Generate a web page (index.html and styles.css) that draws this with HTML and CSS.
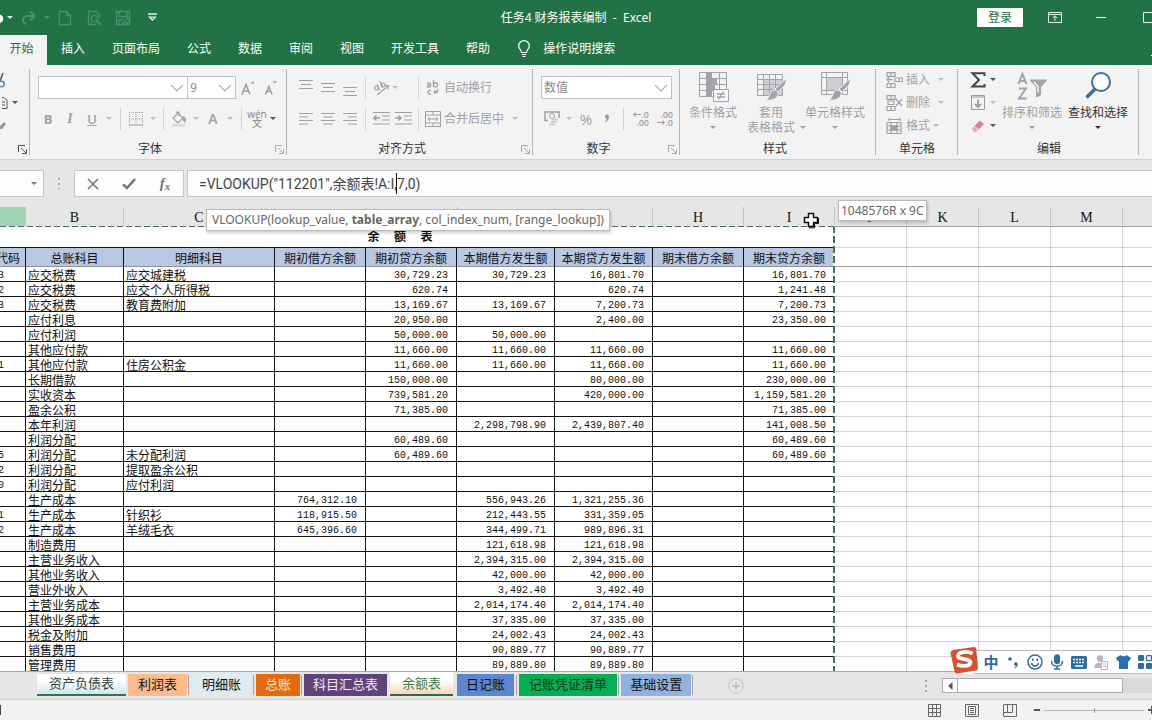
FILE: index.html
```html
<!DOCTYPE html>
<html lang="zh-CN">
<head>
<meta charset="utf-8">
<title>任务4 财务报表编制 - Excel</title>
<link rel="stylesheet" href="styles.css">
</head>
<body>
<header class="titlebar">
  <div class="qat">
    <button class="qb w4" aria-label="撤消"><svg width="4" height="16" viewBox="0 0 4 16"><path d="M-1 4.500A4 4 0 0 1-1 13z" fill="#fff"/></svg></button>
    <button class="dd w12 lit" aria-label="撤消列表"></button>
    <button class="qb w26 faint" aria-label="恢复"><svg width="16" height="16" viewBox="0 0 16 16" fill="none" stroke="currentColor" stroke-width="2"><path d="M12 6H6.500a4 4 0 0 0-1 8M9 1.500 13.500 6 9 10.500"/></svg></button>
    <button class="dd w10 faint" aria-label="恢复列表"></button>
    <button class="qb w26 faint" aria-label="新建"><svg width="16" height="16" viewBox="0 0 16 16" fill="none" stroke="currentColor" stroke-width="1.300"><path d="M2.500 1.500h7l4 4v9h-11zM9.500 1.500v4h4"/></svg></button>
    <button class="qb w32 faint" aria-label="打印预览"><svg width="16" height="16" viewBox="0 0 16 16" fill="none" stroke="currentColor" stroke-width="1.300"><path d="M13.500 8V5l-3-3.500h-8v13h8"/><circle cx="8.500" cy="8.500" r="3.200"/><path d="m11 11 4 4" stroke-width="2"/></svg></button>
    <button class="qb w26 faint" aria-label="保存"><svg width="16" height="16" viewBox="0 0 16 16" fill="none" stroke="currentColor" stroke-width="1.400"><path d="M1.500 1.500h13v13h-13zM4 2v4.500h8V2M4 14v-4h4M8 13l5-5 2 2-5 5z"/></svg></button>
    <button class="qb w32" aria-label="自定义快速访问工具栏"><svg width="9" height="9" viewBox="0 0 9 9" fill="none" stroke="#e2f0e8" stroke-width="1.300"><path d="M0 1h9M1.500 4.200 4.500 7.200l3-3z"/></svg></button>
  </div>
  <div class="doc-title">任务4 财务报表编制&nbsp; -&nbsp; Excel</div>
  <div class="win">
    <button class="login">登录</button>
    <button class="qb w64" aria-label="功能区显示选项"><svg width="14" height="11" viewBox="0 0 14 11" fill="none" stroke="#e2f0e8"><path d="M.500.500h13v10H.500zM.500 2.500h13M7 9V4M4.800 6 7 3.800 9.200 6"/></svg></button>
    <button class="qb w28" aria-label="最小化"><svg width="10" height="3" viewBox="0 0 10 3"><path d="M0 1.500h10" stroke="#e2f0e8"/></svg></button>
    <button class="qb shift" aria-label="最大化"><svg width="12" height="11" viewBox="0 0 12 11"><path d="M.500.500h11v10H.500z" fill="none" stroke="#e2f0e8"/></svg></button>
  </div>
</header>
<nav class="tabs">
  <button class="tab on">开始</button>
  <div class="tab-list">
    <button class="tab">插入</button><button class="tab">页面布局</button><button class="tab">公式</button><button class="tab">数据</button><button class="tab">审阅</button><button class="tab">视图</button><button class="tab">开发工具</button><button class="tab">帮助</button>
    <button class="tab tell"><svg width="14" height="18" viewBox="0 0 14 18" fill="none" stroke="#fff" stroke-width="1.200"><path d="M4.500 12.500c0-2.500-2.800-3.200-2.800-6.500a5.300 5.300 0 0 1 10.600 0c0 3.300-2.800 4-2.800 6.500zM4.800 14.500h4.400M5.500 16.500h3"/></svg>操作说明搜索</button>
  </div>
  <button class="collapse" aria-label="折叠功能区"><svg width="10" height="8" viewBox="0 0 10 8"><path d="m1 6 4-4 4 4" fill="none" stroke="#fff"/></svg></button>
</nav>

<section class="ribbon" aria-label="功能区">
  <div class="group g-clip">
    <div class="stack">
      <button class="ib" aria-label="剪切"><svg width="6" height="16" viewBox="0 0 6 16" fill="none"><path d="M0 9 3 1" stroke="#555" stroke-width="1.500"/><circle cx="1.500" cy="12" r="2.800" stroke="#4f81a8" stroke-width="1.300"/></svg></button>
      <div class="row"><button class="ib w9" aria-label="复制"><svg width="6" height="14" viewBox="0 0 6 14" fill="none" stroke="#555"><path d="M0 1.500h2l3 3v8H0M0 6h3M0 9h3"/></svg></button><button class="dd w12 dark" aria-label="复制选项"></button></div>
      <button class="ib" aria-label="格式刷"><svg width="7" height="14" viewBox="0 0 7 14"><path d="M0 7 4 3l2 2-4 5H0z" fill="#999"/></svg></button>
    </div>
    <div class="foot"><button class="launch dark" aria-label="剪贴板设置"><svg width="9" height="9" viewBox="0 0 9 9" fill="none" stroke="currentColor"><path d="M.500 7V.500H7M3 3l5 5M8.500 4v4.500H4"/></svg></button></div>
  </div>

  <div class="group g-font">
    <div class="row r1">
      <select class="combo w150" aria-label="字体"><option></option></select><select class="combo w49" aria-label="字号"><option>9</option></select>
      <button class="ib w24" aria-label="增大字号"><svg width="16" height="16" viewBox="0 0 16 16" fill="none" stroke="currentColor" stroke-width="1.600"><path d="M2 14.500 6 4.500l4 10M3.500 11h5"/><path d="m10.500 3.500 2.200-2.300L15 3.500z" fill="currentColor" stroke="none"/></svg></button>
      <button class="ib w24" aria-label="减小字号"><svg width="16" height="16" viewBox="0 0 16 16" fill="none" stroke="currentColor" stroke-width="1.600"><path d="m1.500 14.500 3.300-8 3.300 8M2.500 11.500h4.600"/><path d="m8.500 1.200 2.200 2.300L13 1.200z" fill="currentColor" stroke="none"/></svg></button>
    </div>
    <div class="row r2">
      <button class="ib w22 letter bold">B</button><button class="ib w22 letter ital">I</button><button class="ib w22 letter under">U</button><button class="dd w12" aria-label="下划线选项"></button><i class="sep w10"></i>
      <button class="ib w22" aria-label="边框"><svg width="14" height="14" viewBox="0 0 14 14" fill="none" stroke="#a99aaa"><path d="M.500 0v13M7 0v13M13.500 0v13M0 .500h14M0 7h14" stroke-dasharray="1 1"/><path d="M0 13h14" stroke="#999"/></svg></button><button class="dd w12" aria-label="边框选项"></button><i class="sep w8"></i>
      <button class="ib w24" aria-label="填充颜色"><svg width="16" height="16" viewBox="0 0 16 16" fill="none" stroke="currentColor" stroke-width="1.200"><path d="m2 7 5-5 5 5-5 5zM6 4.500V1h2v4"/><path d="M12 6c2.500.500 2.500 2.500 2 5-1-.500-2-2-2-5z" fill="currentColor"/><path d="M1 14.200h13" stroke="#dcdcdf" stroke-width="3"/></svg></button><button class="dd w10" aria-label="填充选项"></button>
      <button class="ib w24 letter semi">A</button><button class="dd w10" aria-label="字体颜色选项"></button><i class="sep w12"></i>
      <button class="ib w20 wen" aria-label="拼音指南"><span>wén</span><span>文</span></button><button class="dd w12 dark" aria-label="拼音选项"></button>
    </div>
    <div class="foot">字体<button class="launch" aria-label="字体设置"><svg width="9" height="9" viewBox="0 0 9 9" fill="none" stroke="currentColor"><path d="M.500 7V.500H7M3 3l5 5M8.500 4v4.500H4"/></svg></button></div>
  </div>

  <div class="group g-align">
    <div class="row r1">
      <button class="ib w22" aria-label="顶端对齐"><svg width="14" height="16" viewBox="0 0 14 16" stroke="currentColor"><path d="M0 .500h14M2 4.500h10M0 8.500h14"/></svg></button><button class="ib w22" aria-label="垂直居中"><svg width="14" height="16" viewBox="0 0 14 16" stroke="currentColor"><path d="M0 3.500h14M2 7.500h10M0 11.500h14"/></svg></button><button class="ib w22" aria-label="底端对齐"><svg width="14" height="16" viewBox="0 0 14 16" stroke="currentColor"><path d="M0 7.500h14M2 11.500h10M0 15.500h14"/></svg></button><i class="sep w9"></i>
      <button class="ib w22" aria-label="方向"><svg width="18" height="16" viewBox="0 0 18 16" fill="none" stroke="currentColor" stroke-width="1.200"><circle cx="4.500" cy="8" r="2"/><path d="M5 4.500 7.500 10M7.500 1l3.500 6"/><circle cx="11" cy="5" r="2"/><path d="M5 15 16 6M12.500 5.500 16.500 5.500 15.800 9.500"/></svg></button><button class="dd w22 lead" aria-label="方向选项"></button><i class="sep w8"></i>
      <button class="ib txt"><svg width="16" height="16" viewBox="0 0 16 16" fill="none" stroke="currentColor" stroke-width="1.300"><path d="M2 3.300c3-1 3.500 0 3.500 1.200V7M5.500 5c-4-.300-4 2.300-2 2.300 1 0 2-.800 2-1.500M8.500 0v7M8.500 4c1-2 4-1.500 4 .800S9.500 7.500 8.500 5.800M6 10.500c-4-1-4 4.500 0 3.500M12.500 9v3H9M10.500 10.500 9 12l1.500 1.500"/></svg>自动换行</button>
    </div>
    <div class="row r2">
      <button class="ib w22" aria-label="左对齐"><svg width="14" height="12" viewBox="0 0 14 12" stroke="currentColor"><path d="M0 .500h14M0 4h9M0 7.500h14M0 11h9"/></svg></button><button class="ib w22" aria-label="居中"><svg width="14" height="12" viewBox="0 0 14 12" stroke="currentColor"><path d="M0 .500h14M2.500 4h9M0 7.500h14M2.500 11h9"/></svg></button><button class="ib w22" aria-label="右对齐"><svg width="14" height="12" viewBox="0 0 14 12" stroke="currentColor"><path d="M0 .500h14M5 4h9M0 7.500h14M5 11h9"/></svg></button><i class="sep w9"></i>
      <button class="ib w22" aria-label="减少缩进"><svg width="17" height="13" viewBox="0 0 17 13" stroke="currentColor" fill="none"><path d="M0 .500h17M9 4h8M9 8h8M0 12h17"/><path d="M1 6h6M3.500 3.500 1 6l2.500 2.500" stroke-width="1.600"/></svg></button><button class="ib w22" aria-label="增加缩进"><svg width="17" height="13" viewBox="0 0 17 13" stroke="currentColor" fill="none"><path d="M0 .500h17M9 4h8M9 8h8M0 12h17"/><path d="M0 6h6M3.500 3.500 6 6 3.500 8.500" stroke-width="1.600"/></svg></button><i class="sep w8"></i>
      <button class="ib txt"><svg width="16" height="16" viewBox="0 0 16 16" fill="none" stroke="currentColor"><path d="M.500.500h15v15H.500zM.500 4h15M.500 12h15M8 .500V4M8 12v3.500M3 8h10M5 6 3 8l2 2M11 6l2 2-2 2"/></svg>合并后居中</button><button class="dd w22" aria-label="合并选项"></button>
    </div>
    <div class="foot">对齐方式<button class="launch" aria-label="对齐设置"><svg width="9" height="9" viewBox="0 0 9 9" fill="none" stroke="currentColor"><path d="M.500 7V.500H7M3 3l5 5M8.500 4v4.500H4"/></svg></button></div>
  </div>

  <div class="group g-num">
    <div class="row r1"><select class="combo w131 fmt" aria-label="数字格式"><option>数值</option></select></div>
    <div class="row r2">
      <button class="ib w22" aria-label="会计格式"><svg width="16" height="15" viewBox="0 0 16 15" fill="none" stroke="currentColor"><path d="M4 9.500H1V1h14v6" stroke-width="1.500"/><circle cx="8" cy="5" r="2.500"/><path d="M8 8.500h6M7 11h6M5 13.500h6" stroke="#d3cdd5" stroke-width="2"/></svg></button><button class="dd w12" aria-label="会计选项"></button>
      <button class="ib w22 pct">%</button><button class="ib w20" aria-label="千位分隔"><svg width="6" height="9" viewBox="0 0 6 9"><path d="M1 2.500a2 2 0 1 1 4 0c0 3-1.500 4.500-3.500 6l-.500-.500C2.200 7 2.500 6 2.500 4.600 1.500 4.500 1 3.500 1 2.500z" fill="#999"/></svg></button><i class="sep w12"></i>
      <button class="ib w20 dec"><span>←.0</span><span>.00</span></button><button class="ib w24 dec"><span>.00</span><span>→.0</span></button>
    </div>
    <div class="foot">数字<button class="launch" aria-label="数字设置"><svg width="9" height="9" viewBox="0 0 9 9" fill="none" stroke="currentColor"><path d="M.500 7V.500H7M3 3l5 5M8.500 4v4.500H4"/></svg></button></div>
  </div>

  <div class="group g-style">
    <div class="bigs">
      <button class="big w58"><svg width="32" height="32" viewBox="0 0 32 32" fill="none" stroke="#a5a2a8"><path d="M2.500 1.500h27v24h-27zM2.500 7.500h27M2.500 13.500h27M2.500 19.500h27M9.500 1.500v24M22.500 1.500v24"/><path d="M10 2h5v5h-5zM10 8h10v5H10zM10 14h8v5h-8zM10 20h5v5h-5z" fill="#a5a2a8" stroke="none"/><path d="M16.500 18.500h15v12h-15z" fill="#f8f7f9"/><path d="M20 23h8M20 26h8M26.500 20.500l-5 8" stroke-width="1.300"/></svg><span>条件格式</span><i class="tri"></i></button>
      <button class="big w58"><svg width="32" height="32" viewBox="0 0 32 32" fill="none" stroke="#a5a2a8"><path d="M8.500 8.500h19v16h-19z" fill="#cfccd2" stroke="none"/><path d="M2.500 3.500h25v21h-25zM2.500 8.500h25M2.500 13.500h25M2.500 18.500h25M8.500 3.500v21M14.500 3.500v21M20.500 3.500v21"/><path d="m32 7-2 7-7 7-3-3z" fill="#a5a2a8" stroke="#f3f3f3"/><path d="M19 19c3 0 5 2 4 5s-5 6-12 5c4-2 3-9 8-10z" fill="#a5a2a8" stroke="#f3f3f3"/></svg><span>套用</span><span class="with">表格格式<i class="tri"></i></span></button>
      <button class="big w70"><svg width="32" height="32" viewBox="0 0 32 32" fill="none" stroke="#a5a2a8"><path d="M8 7h15v12H8z" fill="#cfccd2" stroke="none"/><path d="M2.500 1.500h26v22h-26zM2.500 6.500h26M2.500 19.500h26M7.500 1.500v22M23.500 1.500v22"/><path d="m32 7-2 7-7 7-3-3z" fill="#a5a2a8" stroke="#f3f3f3"/><path d="M18 19c3 0 5 2 4 5s-5 6-12 5c4-2 3-9 8-10z" fill="#a5a2a8" stroke="#f3f3f3"/></svg><span>单元格样式</span><i class="tri"></i></button>
    </div>
    <div class="foot">样式</div>
  </div>

  <div class="group g-cells">
    <div class="stack">
      <div class="row"><button class="ib txt"><svg width="17" height="16" viewBox="0 0 17 16" fill="none" stroke="currentColor" stroke-width="1.200"><path d="M1 .600h8v3.800H1zM5 .600v3.800M1 11.500h8v4H1zM5 11.500v4M9 6h7.500v3.500H9zM13 6v3.500M7 7.700H1M3.500 5 1 7.700l2.500 2.700"/></svg>插入</button><button class="dd w22" aria-label="插入选项"></button></div>
      <div class="row"><button class="ib txt"><svg width="17" height="16" viewBox="0 0 17 16" fill="none" stroke="currentColor" stroke-width="1.200"><path d="M1 .600h8v3.800H1zM5 .600v3.800M1 11.500h8v4H1zM5 11.500v4M2 6h6v3.500H2zM10 4l6 7M16 4l-6 7"/></svg>删除</button><button class="dd w22" aria-label="删除选项"></button></div>
      <div class="row"><button class="ib txt"><svg width="17" height="16" viewBox="0 0 17 16" fill="none" stroke="currentColor" stroke-width="1.200"><path d="M3 0v3M14 0v3M3 1.500h11M1 4.500h14v11H1zM5 4.500v11M11 4.500v11M1 8h14M1 12h14"/><path d="M5 8h6v4H5z" fill="currentColor"/></svg>格式</button><button class="dd w12" aria-label="格式选项"></button></div>
    </div>
    <div class="foot">单元格</div>
  </div>

  <div class="group g-edit">
    <div class="side">
      <div class="stack">
        <div class="row"><button class="ib w18" aria-label="求和"><svg width="16" height="16" viewBox="0 0 16 16" fill="none" stroke="#444" stroke-width="2"><path d="M14.500 4V1.300H2.500L9 8l-6.500 6.500h12V12"/></svg></button><button class="dd w12 dark" aria-label="求和选项"></button></div>
        <div class="row"><button class="ib w18" aria-label="填充"><svg width="14" height="15" viewBox="0 0 14 15" fill="none" stroke="#999"><path d="M.500.500h13v14H.500zM.500 2h13"/><path d="M7 4.500V12M4 9l3 3 3-3" stroke-width="1.800"/></svg></button><button class="dd w12" aria-label="填充选项"></button></div>
        <div class="row"><button class="ib w18" aria-label="清除"><svg width="14" height="14" viewBox="0 0 14 14"><path d="M9 1.500 13 5 7.500 10.500 3.500 7z" fill="#dd7d99"/><path d="m3 7.500 4 3.500-2 2H3L1 10.500V9.500z" fill="#ecaabb"/></svg></button><button class="dd w12 dark" aria-label="清除选项"></button></div>
      </div>
      <button class="big w66"><svg width="32" height="32" viewBox="0 0 32 32" fill="none" stroke="#a5a2a8"><path d="M2.500 13 6.500 3l4 10M4 10h5M3 17.500h7L3 27.500h7.500" stroke-width="2"/><path d="M14 9h17l-6.500 7v8l-4 2V16z" fill="#a5a2a8"/><path d="m18 11 4 4.500v6" stroke="#f3f3f3" stroke-width="1.500"/></svg><span>排序和筛选</span><i class="tri"></i></button>
      <button class="big w66 dark"><svg width="32" height="32" viewBox="0 0 32 32" fill="none" stroke="#3f709a"><path d="m13.500 17.500-9 9" stroke-width="3.500"/><circle cx="19" cy="11" r="9" fill="#fff" stroke-width="2"/></svg><span>查找和选择</span><i class="tri"></i></button>
    </div>
    <div class="foot">编辑</div>
  </div>
</section>

<section class="fbar">
  <button class="namebox" aria-label="名称框"><i class="tri"></i></button>
  <i class="dots"></i>
  <div class="fbtns">
    <button aria-label="取消"><svg width="12" height="12" viewBox="0 0 12 12" stroke="#777" stroke-width="1.600"><path d="m1 1 10 10M11 1 1 11"/></svg></button>
    <button aria-label="输入"><svg width="14" height="12" viewBox="0 0 14 12" fill="none" stroke="#777" stroke-width="2.600"><path d="m1 6.500 4 3.500L13 1"/></svg></button>
    <button class="fx" aria-label="插入函数"><i>f</i><i>x</i></button>
  </div>
  <div class="formula"><input type="text" aria-label="编辑栏" value="=VLOOKUP(&quot;112201&quot;,余额表!A:I,7,0)"><i class="caret"></i></div>
</section>

<main class="sheet">
<table>
<colgroup><col class="ca"><col class="cf"><col class="cc"><col class="cd"><col class="cd"><col class="cf"><col class="cf"><col class="cd"><col class="cd"><col class="cj"><col class="cj"><col class="cj"><col class="cj"><col></colgroup>
<thead><tr><th class="sel"></th><th>B</th><th>C</th><th></th><th></th><th></th><th></th><th>H</th><th>I</th><th>J</th><th>K</th><th>L</th><th>M</th><th></th></tr></thead>
<tbody>
<tr class="t1"><td colspan="9">余  额  表</td><td><td><td><td><td></tr>
<tr class="t2"><td>代码<td>总账科目<td>明细科目<td>期初借方余额<td>期初贷方余额<td>本期借方发生额<td>本期贷方发生额<td>期末借方余额<td>期末贷方余额<td><td><td><td><td></tr>
<tr><td>3<td>应交税费<td>应交城建税<td><td>30,729.23<td>30,729.23<td>16,801.70<td><td>16,801.70<td><td><td><td><td></tr>
<tr><td>2<td>应交税费<td>应交个人所得税<td><td>620.74<td><td>620.74<td><td>1,241.48<td><td><td><td><td></tr>
<tr><td>3<td>应交税费<td>教育费附加<td><td>13,169.67<td>13,169.67<td>7,200.73<td><td>7,200.73<td><td><td><td><td></tr>
<tr><td><td>应付利息<td><td><td>20,950.00<td><td>2,400.00<td><td>23,350.00<td><td><td><td><td></tr>
<tr><td><td>应付利润<td><td><td>50,000.00<td>50,000.00<td><td><td><td><td><td><td><td></tr>
<tr><td><td>其他应付款<td><td><td>11,660.00<td>11,660.00<td>11,660.00<td><td>11,660.00<td><td><td><td><td></tr>
<tr><td>1<td>其他应付款<td>住房公积金<td><td>11,660.00<td>11,660.00<td>11,660.00<td><td>11,660.00<td><td><td><td><td></tr>
<tr><td><td>长期借款<td><td><td>150,000.00<td><td>80,000.00<td><td>230,000.00<td><td><td><td><td></tr>
<tr><td><td>实收资本<td><td><td>739,581.20<td><td>420,000.00<td><td>1,159,581.20<td><td><td><td><td></tr>
<tr><td><td>盈余公积<td><td><td>71,385.00<td><td><td><td>71,385.00<td><td><td><td><td></tr>
<tr><td><td>本年利润<td><td><td><td>2,298,798.90<td>2,439,807.40<td><td>141,008.50<td><td><td><td><td></tr>
<tr><td><td>利润分配<td><td><td>60,489.60<td><td><td><td>60,489.60<td><td><td><td><td></tr>
<tr><td>5<td>利润分配<td>未分配利润<td><td>60,489.60<td><td><td><td>60,489.60<td><td><td><td><td></tr>
<tr><td>2<td>利润分配<td>提取盈余公积<td><td><td><td><td><td><td><td><td><td><td></tr>
<tr><td>0<td>利润分配<td>应付利润<td><td><td><td><td><td><td><td><td><td><td></tr>
<tr><td><td>生产成本<td><td>764,312.10<td><td>556,943.26<td>1,321,255.36<td><td><td><td><td><td><td></tr>
<tr><td>1<td>生产成本<td>针织衫<td>118,915.50<td><td>212,443.55<td>331,359.05<td><td><td><td><td><td><td></tr>
<tr><td>2<td>生产成本<td>羊绒毛衣<td>645,396.60<td><td>344,499.71<td>989,896.31<td><td><td><td><td><td><td></tr>
<tr><td><td>制造费用<td><td><td><td>121,618.98<td>121,618.98<td><td><td><td><td><td><td></tr>
<tr><td><td>主营业务收入<td><td><td><td>2,394,315.00<td>2,394,315.00<td><td><td><td><td><td><td></tr>
<tr><td><td>其他业务收入<td><td><td><td>42,000.00<td>42,000.00<td><td><td><td><td><td><td></tr>
<tr><td><td>营业外收入<td><td><td><td>3,492.40<td>3,492.40<td><td><td><td><td><td><td></tr>
<tr><td><td>主营业务成本<td><td><td><td>2,014,174.40<td>2,014,174.40<td><td><td><td><td><td><td></tr>
<tr><td><td>其他业务成本<td><td><td><td>37,335.00<td>37,335.00<td><td><td><td><td><td><td></tr>
<tr><td><td>税金及附加<td><td><td><td>24,002.43<td>24,002.43<td><td><td><td><td><td><td></tr>
<tr><td><td>销售费用<td><td><td><td>90,889.77<td>90,889.77<td><td><td><td><td><td><td></tr>
<tr><td><td>管理费用<td><td><td><td>89,889.80<td>89,889.80<td><td><td><td><td><td><td></tr>
</tbody>
</table>
<div class="ants"></div>
<div class="hint" role="tooltip">VLOOKUP(lookup_value, <b>table_array</b>, col_index_num, [range_lookup])</div>
<div class="size-tip" role="tooltip">1048576R x 9C</div>
<svg class="cursor" width="16" height="17" viewBox="0 0 16 17"><path d="M5.500 1.500h5v4h4v5h-4v4h-5v-4h-4v-5h4z" fill="#fff" stroke="#111" stroke-width="1.500"/><path d="M6 15.800h5.500v-4.300h4V6" fill="none" stroke="#111"/></svg>
</main>

<footer class="sheetbar">
  <div class="sheets">
    <button class="st s1">资产负债表</button><button class="st s2">利润表</button><i class="bar"></i><button class="st s3">明细账</button><i class="bar"></i><button class="st s4">总账</button><i class="bar"></i><button class="st s5">科目汇总表</button><button class="st s6">余额表</button><button class="st s7">日记账</button><i class="bar"></i><button class="st s8">记账凭证清单</button><i class="bar"></i><button class="st s9">基础设置</button><i class="bar"></i>
  </div>
  <button class="add" aria-label="新工作表"><svg width="16" height="16" viewBox="0 0 16 16" fill="none" stroke="#c4c4c6"><circle cx="8" cy="8" r="7.300"/><path d="M8 4v8M4 8h8" stroke-width="2"/></svg></button>
  <i class="dots small"></i>
  <div class="hscroll"><button aria-label="向左滚动"><svg width="5" height="8" viewBox="0 0 5 8"><path d="M4.500 0v8L0 4z" fill="#555"/></svg></button><div class="thumb"></div></div>
</footer>
<footer class="status">
  <i class="rec"></i>
  <button class="vb" aria-label="普通"><svg width="13" height="13" viewBox="0 0 13 13" fill="none" stroke="#666"><path d="M.500.500h12v12H.500zM4.500.500v12M8.500.500v12M.500 4.500h12M.500 8.500h12"/></svg></button>
  <button class="vb" aria-label="页面布局视图"><svg width="14" height="13" viewBox="0 0 14 13" fill="none" stroke="#666"><path d="M.500.500h13v12H.500zM3.500 2.500h7v8h-7zM5 4.500h4M5 6.500h4M5 8.500h4"/></svg></button>
  <button class="vb" aria-label="分页预览"><svg width="14" height="13" viewBox="0 0 14 13" fill="none" stroke="#666"><path d="M.500.500h13v12H.500zM4.500.500v8h5v-8M.500 8.500h4"/></svg></button>
  <button class="minus" aria-label="缩小"></button>
  <div class="zoomline"></div>
  <button class="plus" aria-label="放大"><svg width="8" height="8" viewBox="0 0 8 8"><path d="M0 4h8M4 0v8" stroke="#555" stroke-width="2"/></svg></button>
</footer>

<aside class="ime" aria-label="输入法">
  <svg class="logo" width="28" height="28" viewBox="0 0 28 28"><path d="M3 4 24 1q2 0 2.200 1.500L28 22q0 2-2 2.500L7 27.500q-2 0-2.500-2L.500 7Q.500 4.500 3 4z" fill="#d6522f"/><path d="M22.500 7.500c-5-2.500-14-2-14.500 2.200-.500 4.300 12.500 2.300 12.500 6.600 0 4-8 4.600-13.500 2.200" fill="none" stroke="#fff" stroke-width="3.800"/></svg>
  <button class="zh">中</button>
  <button aria-label="标点"><svg width="12" height="14" viewBox="0 0 12 14" fill="#2f6c9e"><circle cx="3" cy="4" r="1.800"/><path d="M7 9a1.800 1.800 0 1 1 3.600 0c0 2.500-1.300 3.600-2.600 4.300L7.500 12.500c1-.600 1.300-1.200 1.300-1.800C7.800 10.800 7 10 7 9z"/></svg></button>
  <button aria-label="表情"><svg width="16" height="16" viewBox="0 0 16 16" fill="none" stroke="#2f6c9e" stroke-width="1.500"><circle cx="8" cy="8" r="7"/><path d="M4.500 9c.500 4 6.500 4 7 0M5.800 4.500v2.500M10.200 4.500v2.500"/></svg></button>
  <button aria-label="语音"><svg width="14" height="16" viewBox="0 0 14 16" fill="none" stroke="#2f6c9e" stroke-width="1.500"><rect x="4.700" y="1" width="4.600" height="8.500" rx="2.300" fill="#2f6c9e"/><path d="M1.500 7c0 7 11 7 11 0M7 12.500V15M4 15h6"/></svg></button>
  <button aria-label="键盘"><svg width="16" height="13" viewBox="0 0 16 13"><rect width="16" height="13" rx="1.500" fill="#2f6c9e"/><path d="M2 3.500h12M2 6.500h12" stroke="#fff" stroke-width="1.500" stroke-dasharray="2 1"/><path d="M4 10h8" stroke="#fff" stroke-width="1.500"/></svg></button>
  <button aria-label="用户"><svg width="15" height="15" viewBox="0 0 15 15"><circle cx="6" cy="3.500" r="3.200" fill="#b9b7c6"/><path d="M0 13c0-7 12-7 12 0z" fill="#b9b7c6"/><path d="M7.500 6.500h6v8h-6z" fill="#fff" stroke="#b9b7c6"/><path d="M9 9h3M9 11.500h3" stroke="#b9b7c6"/></svg></button>
  <button aria-label="皮肤"><svg width="15" height="14" viewBox="0 0 15 14"><path d="M4.500 0c1 1.800 5 1.800 6 0L15 3l-1.800 3.500L12 6v8H3V6l-1.200.500L0 3z" fill="#2b6eb0"/></svg></button>
  <button aria-label="工具箱"><svg width="14" height="14" viewBox="0 0 14 14" fill="#2f6c9e"><rect width="6" height="6" rx="1"/><rect x="8.500" y=".700" width="5" height="5" rx="1" fill="none" stroke="#2f6c9e" stroke-width="1.300"/><rect y="8" width="6" height="6" rx="1"/><rect x="8" y="8" width="6" height="6" rx="1"/></svg></button>
</aside>
</body>
</html>
```
FILE: styles.css
```css
* { box-sizing: border-box; }
body { margin: 0; height: 100vh; overflow: hidden; display: flex; flex-direction: column; position: relative; background: #fff; font: 12px/16px "Open Sans", "Noto Sans CJK SC", sans-serif; color: #222; }
button { border: 0; padding: 0; margin: 0; background: none; font: inherit; color: inherit; display: flex; align-items: center; justify-content: center; flex: none; white-space: nowrap; }
svg { display: block; flex: none; }
i { font-style: normal; }

.w4 { width: 4px; } .w8 { width: 8px; } .w9 { width: 9px; } .w10 { width: 10px; } .w12 { width: 12px; }
.w18 { width: 18px; } .w20 { width: 20px; } .w22 { width: 22px; } .w24 { width: 24px; } .w26 { width: 26px; }
.w28 { width: 28px; } .w32 { width: 32px; } .w49 { width: 49px; } .w58 { width: 58px; } .w64 { width: 64px; }
.w66 { width: 66px; } .w70 { width: 70px; } .w131 { width: 131px; } .w150 { width: 150px; }

/* title bar */
.titlebar { flex: none; height: 35px; background: #217346; color: #fff; display: grid; grid-template-columns: 1fr auto 1fr; align-items: center; }
.doc-title { font-family: "Noto Sans", "Noto Sans CJK SC", sans-serif; }
.qat { display: flex; align-items: center; }
.qb { height: 20px; }
.faint { color: #4c9069; }
.lit { color: #e2f0e8; }
.win { display: flex; align-items: center; justify-content: flex-end; overflow: hidden; }
.login { width: 46px; height: 19px; background: #fff; color: #217346; border-radius: 1px; }
.shift { width: 40px; justify-content: flex-end; margin-right: -3px; }

.dd { height: 20px; }
.dd::before, .tri { content: ""; display: block; width: 0; height: 0; border: 3px solid transparent; border-top-color: currentColor; border-bottom: 0; }
.dd { color: #bdbbbf; }
.dd.dark { color: #555; }
.dd.lit { color: #e2f0e8; }
.dd.faint { color: #4c9069; }
.dd.lead { justify-content: flex-start; }

/* ribbon tabs */
.tabs { flex: none; height: 30px; background: #217346; color: #fff; display: flex; }
.tab.on { width: 47px; background: #f3f3f3; color: #217346; padding-right: 4px; }
.tab { padding-bottom: 3px; }
.tab-list { flex: 1; display: flex; gap: 27px; padding-left: 14px; }
.tell { gap: 12px; }
.collapse { align-self: flex-end; height: 22px; margin-right: -8px; }

/* ribbon */
.ribbon { flex: none; height: 95px; background: #f3f3f3; border-bottom: 1px solid #d0d0d2; display: flex; color: #a19fa4; overflow: hidden; }
.group { position: relative; display: flex; flex-direction: column; flex: none; padding-left: 8px; padding-top: 11px; }
.group::after { content: ""; position: absolute; right: 0; top: 4px; bottom: 4px; width: 1px; background: #b6b5b8; }
.g-clip { width: 30px; padding-left: 0; padding-top: 3px; }
.g-font { width: 257px; padding-left: 7px; }
.g-align { width: 246px; }
.g-num { width: 147px; }
.g-style { width: 196px; padding-left: 4px; padding-top: 6px; }
.g-cells { width: 82px; padding-left: 10px; padding-top: 3px; }
.g-edit { width: 181px; padding-top: 3px; padding-left: 11px; }
.row { display: flex; align-items: center; height: 23px; flex: none; }
.r2 { margin-top: 8px; }
.stack { display: flex; flex-direction: column; align-items: flex-start; }
.g-font .r1 { padding-left: 1px; }
.foot { margin-top: auto; height: 18px; line-height: 16px; display: flex; justify-content: center; align-items: flex-start; color: #333; padding-right: 16px; position: relative; flex: none; margin-left: -8px; }
.g-clip .foot { margin-left: 0; }
.g-style .foot, .g-cells .foot, .g-edit .foot { padding-right: 2px; }
.launch { position: absolute; right: 3px; top: 4px; color: #a9a7ab; }
.launch.dark { color: #555; }
.ib { height: 22px; }
.stack > .ib { height: 23px; }
.txt { gap: 3px; padding-left: 3px; }
.g-cells .txt { padding-left: 0; }
.combo { appearance: none; height: 23px; margin: 0; border: 1px solid #c3c1c5; border-radius: 0; background: #fff url("data:image/svg+xml,%3Csvg xmlns='http://www.w3.org/2000/svg' width='14' height='8'%3E%3Cpath d='M1 1l6 6 6-6' fill='none' stroke='%23b5b3b7' stroke-width='1.300'/%3E%3C/svg%3E") no-repeat right 3px center; font: inherit; color: #8a888c; padding: 0 0 0 2px; }
.w49 { margin-left: -1px; }
.letter { font-weight: 600; font-size: 13px; }
.bold { font-weight: 700; }
.ital { font-style: italic; font-family: "Liberation Serif", serif; font-size: 14px; font-weight: 700; }
.under { text-decoration: underline; }
.semi { font-size: 14px; }
.sep { height: 22px; flex: none; display: flex; justify-content: center; }
.sep::before { content: ""; width: 1px; background: #d2d0d4; }
.wen { flex-direction: column; font-size: 10px; line-height: 9px; color: #858387; }
.pct { font-size: 15px; }
.dec { flex-direction: column; font-size: 9px; line-height: 8px; align-items: flex-end; font-weight: 600; }
.bigs, .side { display: flex; }
.big { flex-direction: column; justify-content: flex-start; align-items: center; line-height: 15px; height: 70px; }
.big span { display: flex; align-items: center; gap: 5px; }
.big svg + span { margin-top: 2px; }
.big .with { padding-left: 11px; }
.big > .tri { margin-top: 6px; }
.side .big { padding-top: 3px; }
.big.dark { color: #333; }

/* formula bar */
.fbar { flex: none; height: 47px; padding: 10px 0; background: #e6e6e7; display: flex; align-items: stretch; }
.namebox { width: 44px; background: #fdfdfd; border: 1px solid #c6c6c8; border-left: 0; justify-content: flex-end; padding-right: 6px; color: #777; }
.dots { width: 2px; margin: 8px 14px; background: repeating-linear-gradient(#aaa 0 2px, transparent 2px 5px); flex: none; }
.fbtns { width: 110px; background: #fdfdfd; border: 1px solid #c6c6c8; display: flex; align-items: stretch; margin-right: 3px; }
.fbtns button { flex: 1; }
.fx { font: bold 15px "Liberation Serif", serif; color: #777; }
.fx i { font-style: italic; }
.fx i + i { font-size: 11px; padding-top: 4px; }
.formula { flex: 1; position: relative; display: flex; }
.formula input { width: 100%; border: 1px solid #c6c6c8; border-right: 0; background: #fdfdfd; font: 14px Roboto, "Noto Sans CJK SC", sans-serif; color: #444; padding: 0 11px 2px; border-radius: 0; }
.caret { position: absolute; left: 209px; top: 3px; width: 1px; height: 21px; background: #111; }

/* worksheet */
.sheet { flex: 1; min-height: 0; position: relative; overflow: clip; overflow-clip-margin: 8px; }
table { table-layout: fixed; width: calc(100% + 34px); margin-left: -34px; border-collapse: separate; border-spacing: 0; }
.ca { width: 60px; } .cf { width: 98px; } .cc { width: 151px; } .cd { width: 91px; } .cj { width: 72px; }
th { height: 20px; padding: 3px 0 0; background: #e6e6e7; border-right: 1px solid #c4c4c6; border-bottom: 1px solid #a0a0a2; font: 14px/16px "Liberation Serif", serif; color: #111; }
th.sel { background: #9fd4b6; }
td { height: 15px; padding: 3px 2px 0; line-height: 11px; border-right: 1px solid #d4d4d6; border-bottom: 1px solid #d4d4d6; white-space: nowrap; color: #111; }
td:nth-child(-n+9) { border-color: #111; }
td:nth-child(n+4) { font-family: "Liberation Mono", monospace; font-size: 10px; text-align: right; padding-right: 8px; }
td:first-child { padding-left: 32px; font-family: "Liberation Mono", monospace; font-size: 10px; }
td:nth-child(9) { border-right-color: #d4d4d6; }
th:last-child, td:last-child { border-right: 0; }
.t1 td { height: 21px; border-right-color: #d4d4d6; border-bottom-color: #d4d4d6; }
.t1 td:first-child { white-space: pre; text-align: center; font: bold 12px/18px "Liberation Mono", "Noto Sans CJK SC", monospace; padding: 2px 0 0; border-bottom-color: #111; }
.t2 td { height: 19px; border-bottom-color: #999; }
.t2 td:nth-child(-n+9) { background: #b8c7e2; font: 12px/17px "Noto Sans CJK SC", sans-serif; text-align: center; padding: 1px 0 0; border-bottom-color: #8f9098; }
.t2 td:first-child { text-align: right; padding-right: 5px; }
.ants { position: absolute; left: 0; top: 19px; width: 835px; bottom: 0; background: repeating-linear-gradient(90deg, #4c6b5e 0 6px, #e6e6e7 6px 9px) top / 100% 1px no-repeat, repeating-linear-gradient(#4c6b5e 0 7px, #fff 7px 10px) right / 2px 100% no-repeat; }
.hint, .size-tip { position: absolute; background: #fff; border: 1px solid #bbb; box-shadow: 1px 2px 3px rgba(0, 0, 0, .2); color: #666; white-space: nowrap; font-family: "Noto Sans", sans-serif; font-size: 12px; }
.hint { left: 206px; top: 2px; height: 22px; line-height: 20px; padding: 0 5px; }
.size-tip { left: 838px; top: -7px; height: 21px; line-height: 19px; padding: 0 2px; }
.cursor { position: absolute; left: 803px; top: 5px; }

/* sheet tabs */
.sheetbar { flex: none; height: 29px; background: #e6e6e7; border-top: 1px solid #a8a8aa; border-bottom: 1px solid #cfcfd1; display: flex; align-items: center; position: relative; }
.sheets { display: flex; align-self: stretch; padding-left: 37px; flex: none; }
.st { font-size: 13px; height: 22px; margin-top: 2px; padding: 0 9px 2px; color: #111; }
.s1 { padding: 0 12px 2px; background: linear-gradient(#fff 30%, #cfe6ef); border-bottom: 2px solid #3a6e54; margin-right: 2px; color: #33443f; }
.s2 { background: #fcba8e; padding: 0 10px 2px; }
.s3 { background: #dcebf4; padding: 0 11px 2px; }
.s4 { background: #e26b0f; color: #ffe3b8; }
.s5 { background: #604479; color: #f3e8f4; }
.s6 { background: linear-gradient(#fff 40%, #fbd3bb); border-bottom: 2px solid #2f6b40; color: #3f7a45; margin: 0 4px 0 3px; height: 24px; padding: 2px 12px 2px; }
.s7 { background: #5a87d0; }
.s8 { background: #06ad52; color: #0c3a1c; padding: 0 10px 2px; }
.s9 { background: #92b1df; }
.bar { width: 1px; margin: 3px 2px 4px 1px; background: #9fa5ab; }
.s7 + .bar { margin-left: 2px; }
.add { margin-left: 33px; }
.small { margin: 0 15px 0 auto; height: 12px; }
.hscroll { width: 210px; height: 15px; background: #d9d8da; display: flex; flex: none; }
.hscroll button { width: 16px; background: #fff; border: 1px solid #ababad; }
.thumb { width: 165px; background: #fff; border: 1px solid #ababad; border-left: 0; }

/* status bar */
.status { flex: none; height: 20px; background: #f2f2f3; display: flex; align-items: center; overflow: hidden; }
.rec { width: 1px; height: 10px; background: #444; margin-right: auto; }
.vb { width: 38px; }
.minus { width: 6px; height: 2px; background: #555; margin-left: 5px; }
.zoomline { width: 100px; height: 5px; margin: 0 4px; background: linear-gradient(#999, #999) center / 1px 5px no-repeat, linear-gradient(#b5b5b7, #b5b5b7) center / 100% 1px no-repeat; }
.plus { margin-right: -4px; }

/* input method bar */
.ime { position: absolute; right: 0; top: 650px; height: 24px; width: 202px; display: flex; align-items: center; background: linear-gradient(90deg, transparent 12px, #fff 12px); }
.ime::before { content: ""; position: absolute; left: 24px; right: 0; top: 0; bottom: 0; border-top: 1px solid #bbb; border-bottom: 1px solid #bbb; pointer-events: none; }
.ime button { width: 22px; }
.logo { margin: 0 2px 4px 0; position: relative; }
.ime .zh { color: #2f6c9e; font: bold 15px/20px "Noto Sans CJK SC", sans-serif; }
```
